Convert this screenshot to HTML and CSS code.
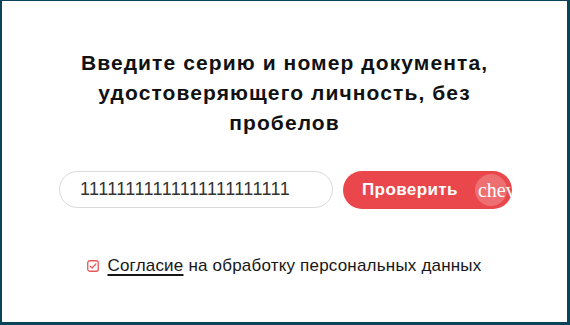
FILE: index.html
```html
<!DOCTYPE html>
<html lang="ru">
<head>
<meta charset="utf-8">
<link rel="stylesheet" href="styles.css">
</head>
<body>
<div class="frame">
  <div class="content">
    <h1 class="title">Введите серию и номер документа, удостоверяющего личность, без пробелов</h1>
    <form class="row" onsubmit="return false">
      <input class="field" type="text" value="11111111111111111111111">
      <button class="btn" type="button">
        <span class="btn-label">Проверить</span>
        <span class="btn-icon"><span class="ripple"></span><span class="icon-text">chevron_right</span></span>
      </button>
    </form>
    <label class="consent">
      <svg class="check" width="12" height="12" viewBox="0 0 12 12">
        <rect x="0.75" y="0.75" width="10.5" height="10.5" rx="2" fill="none" stroke="#e5565a" stroke-width="1.3"/>
        <path d="M3.2 6.1 L5.1 8 L8.9 3.9" fill="none" stroke="#e5565a" stroke-width="1.3" stroke-linecap="round" stroke-linejoin="round"/>
      </svg>
      <span><a class="link" href="#">Согласие</a> на обработку персональных данных</span>
    </label>
  </div>
</div>
</body>
</html>
```
FILE: styles.css
```css
html, body {
  margin: 0;
  padding: 0;
  background: #0b4358;
}
.frame {
  box-sizing: border-box;
  width: 570px;
  height: 325px;
  border-style: solid;
  border-color: #0b4358;
  border-width: 1px 3px 3px 2px;
  background: #ffffff;
  font-family: "Liberation Sans", Arial, sans-serif;
  color: #161616;
  overflow: hidden;
}
.content {
  display: flex;
  flex-direction: column;
  align-items: center;
  padding-top: 47px;
}
.title {
  margin: 0;
  width: 430px;
  font-size: 21px;
  line-height: 30px;
  letter-spacing: 1.1px;
  font-weight: bold;
  text-align: center;
  color: #111;
}
.row {
  display: flex;
  gap: 10px;
  margin: 33px 0 0 0;
  padding-left: 2px;
}
.field {
  box-sizing: border-box;
  width: 274px;
  height: 37px;
  border: 1px solid #d9d9d9;
  border-radius: 19px;
  padding: 0 0 0 20px;
  font-family: "Liberation Sans", Arial, sans-serif;
  font-size: 18px;
  letter-spacing: 0.4px;
  color: #333;
  outline: none;
}
.btn {
  box-sizing: border-box;
  width: 169px;
  height: 38px;
  border: none;
  border-radius: 19px;
  background: #e9474b;
  color: #fff;
  padding: 0 0 0 19px;
  display: flex;
  align-items: center;
  overflow: hidden;
  cursor: pointer;
}
.btn-label {
  font-family: "Liberation Sans", Arial, sans-serif;
  font-weight: bold;
  font-size: 17px;
  letter-spacing: 0.4px;
}
.btn-icon {
  position: relative;
  margin-left: 20px;
  display: flex;
  align-items: center;
  height: 38px;
}
.ripple {
  position: absolute;
  left: -3px;
  top: 3px;
  width: 32px;
  height: 32px;
  border-radius: 50%;
  background: rgba(255, 255, 255, 0.22);
}
.icon-text {
  position: relative;
  font-family: "Liberation Serif", "Times New Roman", serif;
  font-size: 20px;
  white-space: nowrap;
}
.consent {
  display: flex;
  align-items: center;
  gap: 8px;
  margin-top: 47px;
  font-size: 17px;
  letter-spacing: 0.2px;
  color: #161616;
}
.check {
  display: block;
}
.link {
  color: #161616;
  text-decoration: underline;
  text-decoration-thickness: 2px;
  text-underline-offset: 3px;
}
```
